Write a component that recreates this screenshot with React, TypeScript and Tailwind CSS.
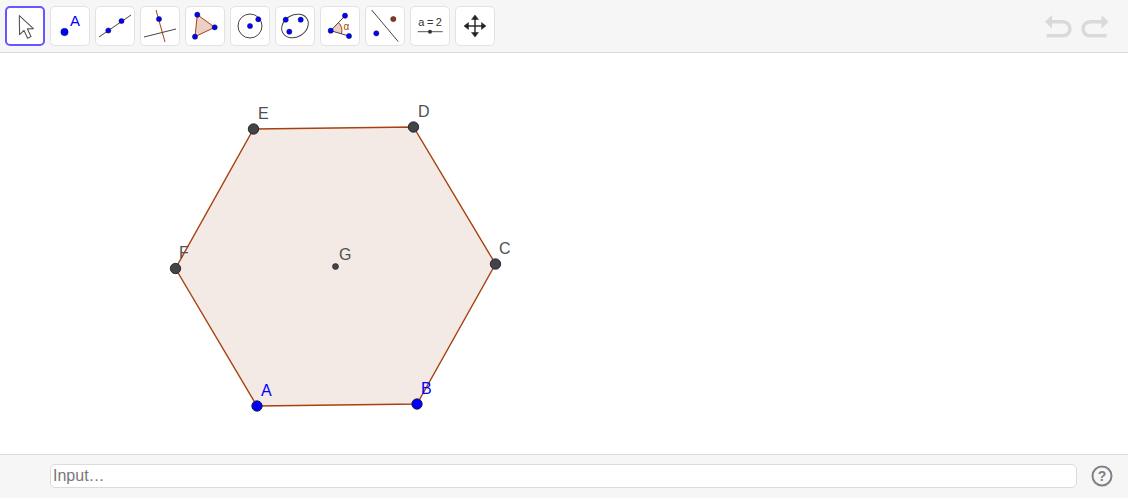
import React from 'react';

const BLUE = '#0000ff';
const ORANGE = '#a8410f';
const DARK = '#444444';
const LABEL = '#505050';

// pontos do hexagono em coordenadas da pagina
const hexagon = [
  { name: 'A', x: 257, y: 406, lx: 261, ly: 396, fill: BLUE, text: BLUE },
  { name: 'B', x: 417, y: 404, lx: 421, ly: 394, fill: BLUE, text: BLUE },
  { name: 'C', x: 495.5, y: 264, lx: 499, ly: 254, fill: DARK, text: LABEL },
  { name: 'D', x: 413.5, y: 127, lx: 418, ly: 117, fill: DARK, text: LABEL },
  { name: 'E', x: 253.5, y: 129, lx: 258, ly: 119, fill: DARK, text: LABEL },
  { name: 'F', x: 175.5, y: 268.5, lx: 179, ly: 258, fill: DARK, text: LABEL },
];

const Dot = ({ x, y, fill = BLUE, r = 2.6 }: { x: number; y: number; fill?: string; r?: number }) => (
  <circle cx={x} cy={y} r={r} fill={fill} stroke="#1c1c3a" strokeWidth={0.5} />
);

const icons: React.ReactNode[] = [
  <path key="cursor" d="M14.3 9.7 L14.6 28.6 L19 24.4 L22.6 32.2 L26 30.6 L22.4 22.9 L28.4 22.6 Z" fill="#fff" stroke="#555" strokeWidth={1.1} strokeLinejoin="round" />,
  <g key="point">
    <circle cx={14.5} cy={26} r={3.7} fill={BLUE} stroke="#1c1c3a" strokeWidth={0.5} />
    <text x={25} y={20} textAnchor="middle" fontSize={15} fill={BLUE} fontFamily="Liberation Sans, sans-serif">A</text>
  </g>,
  <g key="line">
    <line x1={4} y1={31} x2={36} y2={9} stroke="#444" strokeWidth={1} />
    <Dot x={13.3} y={24.5} />
    <Dot x={26.5} y={15} />
  </g>,
  <g key="perp">
    <line x1={16} y1={4} x2={25} y2={36} stroke={ORANGE} strokeWidth={1} />
    <line x1={4} y1={31} x2={36} y2={23} stroke="#444" strokeWidth={1} />
    <Dot x={19} y={13} />
  </g>,
  <g key="polygon">
    <polygon points="12.3,8.7 29.7,21.3 10,30.7" fill="#eccfc5" stroke={ORANGE} strokeWidth={1} />
    <Dot x={12.3} y={8.7} />
    <Dot x={29.7} y={21.3} />
    <Dot x={10} y={30.7} />
  </g>,
  <g key="circle">
    <circle cx={20} cy={20} r={12} fill="none" stroke="#444" strokeWidth={1} />
    <Dot x={20} y={20} />
    <Dot x={28.3} y={13.3} />
  </g>,
  <g key="conic">
    <ellipse cx={20} cy={20} rx={14} ry={11} transform="rotate(-30 20 20)" fill="none" stroke="#444" strokeWidth={1} />
    <Dot x={10.7} y={13.7} />
    <Dot x={25.7} y={13.7} />
    <Dot x={14.3} y={25.7} />
  </g>,
  <g key="angle">
    <path d="M10.7 24.7 L18.5 16.5 A12 12 0 0 1 21.5 27.8 Z" fill="#eccfc5" stroke="none" />
    <path d="M18.5 16.5 A12 12 0 0 1 21.5 27.8" fill="none" stroke={ORANGE} strokeWidth={1} />
    <line x1={10.7} y1={24.7} x2={25} y2={9.7} stroke="#444" strokeWidth={1} />
    <line x1={10.7} y1={24.7} x2={29} y2={30} stroke="#444" strokeWidth={1} />
    <text x={26.5} y={23.5} textAnchor="middle" fontSize={10} fill={ORANGE} fontFamily="Liberation Sans, sans-serif">α</text>
    <Dot x={10.7} y={24.7} />
    <Dot x={25} y={9.7} />
    <Dot x={29} y={30} />
  </g>,
  <g key="parallel">
    <line x1={6.7} y1={4} x2={33.3} y2={35.7} stroke="#444" strokeWidth={1} />
    <Dot x={28.3} y={13} fill="#8b3a0f" />
    <Dot x={11.3} y={27.3} />
  </g>,
  <g key="slider">
    <text x={20} y={20} textAnchor="middle" fontSize={11} letterSpacing={-0.3} fill="#333" fontFamily="Liberation Sans, sans-serif">a = 2</text>
    <line x1={7.7} y1={25.7} x2={32.7} y2={25.7} stroke="#555" strokeWidth={1} />
    <circle cx={20} cy={25.7} r={2} fill="#333" />
  </g>,
  <g key="move" fill="#222" stroke="#222">
    <line x1={20} y1={11} x2={20} y2={29} strokeWidth={1.4} />
    <line x1={11} y1={20} x2={29} y2={20} strokeWidth={1.4} />
    <polygon points="20,9 16.5,13.5 23.5,13.5" strokeWidth={0.5} />
    <polygon points="20,31 16.5,26.5 23.5,26.5" strokeWidth={0.5} />
    <polygon points="9,20 13.5,16.5 13.5,23.5" strokeWidth={0.5} />
    <polygon points="31,20 26.5,16.5 26.5,23.5" strokeWidth={0.5} />
  </g>,
];

export default function App() {
  return (
    <div className="flex h-[498px] w-[1128px] flex-col overflow-hidden bg-white font-['Liberation_Sans',sans-serif]">
      {/* Barra de ferramentas */}
      <div className="flex h-[53px] shrink-0 items-start justify-between border-b border-[#dcdcdc] bg-[#f6f6f6] pl-[5px] pr-[18px] pt-[6px]">
        <div className="flex gap-[5px]">
          {icons.map((icon, i) => (
            <div
              key={i}
              className={
                i === 0
                  ? 'h-10 w-10 rounded-[5px] border-2 border-[#6557ff] bg-white'
                  : 'h-10 w-10 rounded-[5px] border border-[#e2e2e2] bg-white'
              }
            >
              <svg width={40} height={40} viewBox={i === 0 ? '2 2 40 40' : '1 1 40 40'} className="block">
                {icon}
              </svg>
            </div>
          ))}
        </div>
        <svg width={66} height={30} viewBox="1044 11 66 30" className="mt-[5px]">
          <g fill="none" stroke="#d9d9d9" strokeWidth={3.5}>
            <path d="M1050 21.7 H1063 a7 7 0 0 1 0 14 H1046.5" />
            <path d="M1103 21.7 H1090 a7 7 0 0 0 0 14 H1106.5" />
          </g>
          <polygon points="1045,21.7 1052,15 1052,28.5" fill="#d9d9d9" />
          <polygon points="1108.5,21.7 1101.5,15 1101.5,28.5" fill="#d9d9d9" />
        </svg>
      </div>

      {/* Area de desenho */}
      <div className="min-h-0 flex-1">
        <svg width={1128} height={401} viewBox="0 53 1128 401" className="block">
          <polygon
            points={hexagon.map((p) => `${p.x},${p.y}`).join(' ')}
            fill="#f3eae6"
            stroke={ORANGE}
            strokeWidth={1.4}
          />
          <circle cx={335.5} cy={266.5} r={3} fill={DARK} stroke="#1c1c3a" strokeWidth={0.6} />
          <text x={339} y={260} fontSize={16} fill={LABEL} fontFamily="Liberation Sans, sans-serif">G</text>
          {hexagon.map((p) => (
            <g key={p.name}>
              <circle cx={p.x} cy={p.y} r={5.2} fill={p.fill} stroke="#1c1c3a" strokeWidth={0.9} />
              <text x={p.lx} y={p.ly} fontSize={16} fill={p.text} fontFamily="Liberation Sans, sans-serif">
                {p.name}
              </text>
            </g>
          ))}
        </svg>
      </div>

      {/* Barra de entrada */}
      <div className="flex h-11 shrink-0 items-start gap-[14px] border-t border-[#dcdcdc] bg-[#f6f6f6] pl-[50px] pr-[15px] pt-[9px]">
        <input
          placeholder="Input…"
          className="h-6 min-w-0 flex-1 rounded-[5px] border border-[#dcdcdc] bg-white px-[2px] text-base text-[#555] outline-none placeholder:text-[#777]"
        />
        <svg width={22} height={22} viewBox="0 0 22 22" className="mt-px shrink-0">
          <circle cx={11} cy={11} r={9.5} fill="none" stroke="#808080" strokeWidth={2} />
          <text x={11} y={16} textAnchor="middle" fontSize={14} fontWeight="bold" fill="#808080" fontFamily="Liberation Sans, sans-serif">?</text>
        </svg>
      </div>
    </div>
  );
}
